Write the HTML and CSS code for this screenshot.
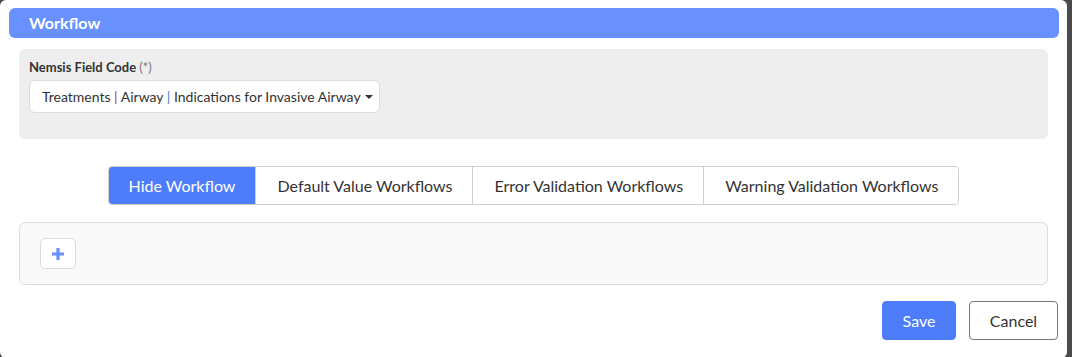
FILE: index.html
```html
<!DOCTYPE html>
<html>
<head>
<meta charset="utf-8">
<link rel="stylesheet" href="styles.css">
</head>
<body>
<div class="modal">
  <div class="modal-header">Workflow</div>
  <div class="modal-body">
    <div class="field-panel">
      <label class="field-label">Nemsis Field Code <span class="req">(*)</span></label>
      <div class="select">
        <span>Treatments <span class="pipe red">|</span> Airway <span class="pipe blue">|</span> Indications for Invasive Airway</span>
        <span class="caret"></span>
      </div>
    </div>
    <div class="tabs-row">
      <div class="tabs">
        <button class="tab active">Hide Workflow</button>
        <button class="tab">Default Value Workflows</button>
        <button class="tab">Error Validation Workflows</button>
        <button class="tab">Warning Validation Workflows</button>
      </div>
    </div>
    <div class="workflow-panel">
      <button class="add-btn" aria-label="Add">
        <svg width="14" height="14" viewBox="0 0 14 14"><path d="M7 1v12M1 7h12" stroke="#6b8dff" stroke-width="3.2" fill="none"/></svg>
      </button>
    </div>
  </div>
  <div class="modal-footer">
    <button class="btn btn-primary">Save</button>
    <button class="btn btn-secondary">Cancel</button>
  </div>
</div>
</body>
</html>
```
FILE: styles.css
```css
html, body {
  margin: 0;
  padding: 0;
  background: #4b4b4b;
  height: 357px;
  overflow: hidden;
}
body {
  font-family: Lato, "Open Sans", sans-serif;
  color: #333;
}
.modal {
  width: 1067px;
  height: 358px;
  box-sizing: border-box;
  background: #fff;
  border-radius: 6px;
  padding: 8px 8px 0 9px;
}
.modal-header {
  height: 30px;
  background: #6891ff;
  border-radius: 6px;
  color: #fff;
  font-weight: 700;
  font-size: 16px;
  line-height: 30px;
  padding-left: 20px;
}
.modal-body {
  padding: 11px 11px 0 10px;
}
.field-panel {
  background: #eeeeee;
  border-radius: 6px;
  height: 90px;
  box-sizing: border-box;
  padding: 10px 10px 0 10px;
}
.field-label {
  display: block;
  font-size: 13px;
  font-weight: 700;
  color: #333;
  line-height: 16px;
  margin-bottom: 5px;
}
.field-label .req {
  font-weight: 400;
  color: #777;
}
.select {
  width: 351px;
  height: 33px;
  box-sizing: border-box;
  background: #fff;
  border: 1px solid #dcdcdc;
  border-radius: 6px;
  display: flex;
  align-items: center;
  padding-left: 12px;
  font-size: 14px;
  color: #333;
}
.pipe.red { color: #9a4a4a; }
.pipe.blue { color: #4a80c8; }
.caret {
  margin-left: 4px;
  width: 0;
  height: 0;
  border-left: 4px solid transparent;
  border-right: 4px solid transparent;
  border-top: 4px solid #333;
}
.tabs-row {
  display: flex;
  justify-content: center;
  margin-top: 27px;
}
.tabs {
  display: flex;
  border: 1px solid #cfcfcf;
  border-radius: 4px;
  overflow: hidden;
}
.tab {
  font-family: inherit;
  font-size: 16px;
  color: #333;
  background: #fff;
  border: 0;
  border-left: 1px solid #cfcfcf;
  height: 37px;
  padding: 0 20px 0 21px;
  margin: 0;
}
.tab:first-child { border-left: 0; }
.tab.active {
  background: #4e7dfb;
  color: #fff;
  padding: 0 20px;
}
.workflow-panel {
  margin-top: 17px;
  background: #f9f9f9;
  border: 1px solid #dcdcdc;
  border-radius: 6px;
  padding: 15px 20px;
}
.add-btn {
  width: 36px;
  height: 31px;
  background: #fff;
  border: 1px solid #dcdcdc;
  border-radius: 5px;
  display: flex;
  align-items: center;
  justify-content: center;
  padding: 0;
}
.modal-footer {
  display: flex;
  justify-content: flex-end;
  gap: 13px;
  margin-top: 16px;
  padding-right: 1px;
}
.btn {
  font-family: inherit;
  font-size: 16px;
  height: 39px;
  border-radius: 4px;
  padding: 0;
}
.btn-primary {
  width: 74px;
  background: #4e7dfb;
  border: 1px solid #4e7dfb;
  color: #fff;
}
.btn-secondary {
  width: 89px;
  background: #fff;
  border: 1px solid #777;
  color: #333;
}
```
